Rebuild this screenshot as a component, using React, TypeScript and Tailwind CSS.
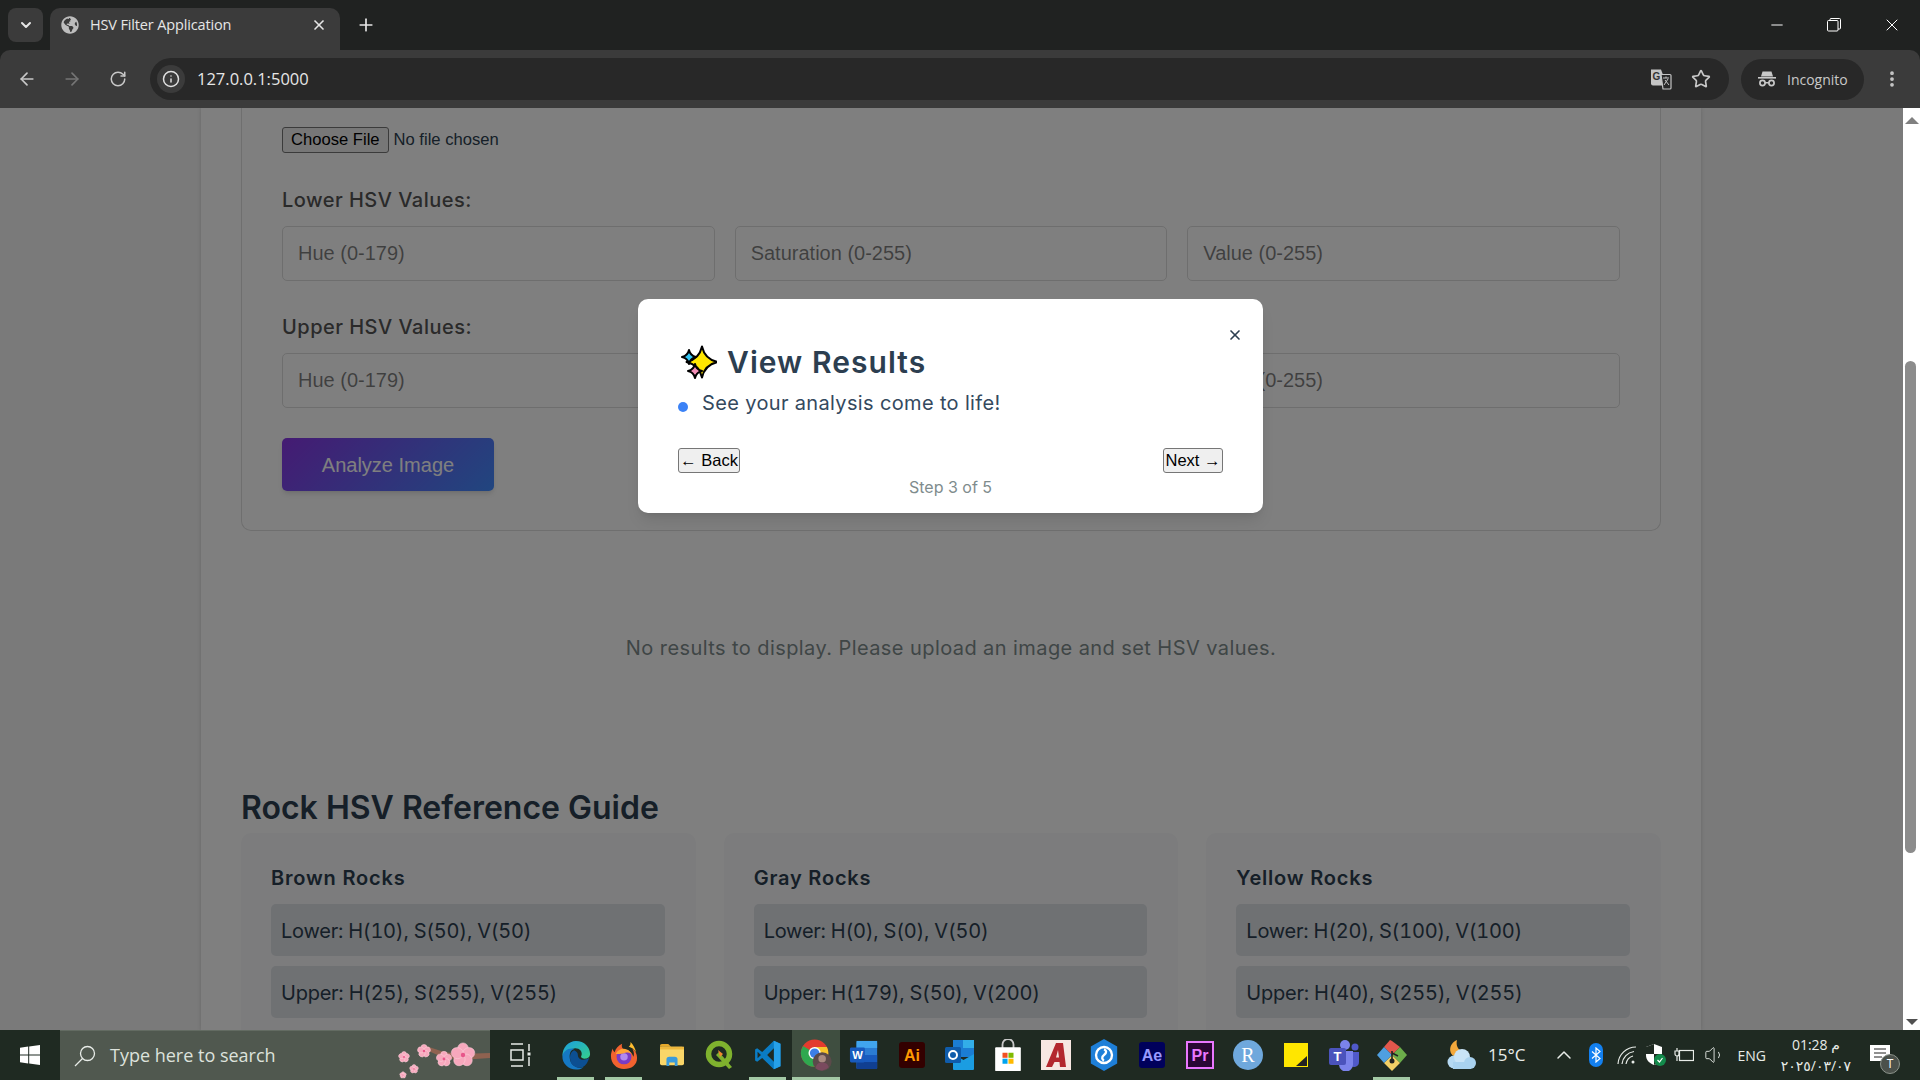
import { ArrowLeft, ArrowRight, ChevronDown, ChevronUp, Info, Minus, MoreVertical, Plus, RotateCw, Star, Volume1, X } from "lucide-react";
import { FaGlobeAmericas } from "react-icons/fa";
import type { ReactNode } from "react";

const ui = "font-['Inter',sans-serif]";

const guides = [
  { name: "Brown Rocks", lower: "Lower: H(10), S(50), V(50)", upper: "Upper: H(25), S(255), V(255)" },
  { name: "Gray Rocks", lower: "Lower: H(0), S(0), V(50)", upper: "Upper: H(179), S(50), V(200)" },
  { name: "Yellow Rocks", lower: "Lower: H(20), S(100), V(100)", upper: "Upper: H(40), S(255), V(255)" },
];

const HsvRow = ({ label, top }: { label: string; top: string }) => (
  <div className={top}>
    <div className={`${ui} text-[20px] leading-[30px] font-medium tracking-[0.024em] text-[#555]`}>{label}</div>
    <div className="mt-[11px] grid grid-cols-3 gap-5">
      {["Hue (0-179)", "Saturation (0-255)", "Value (0-255)"].map((p) => (
        <input
          key={p}
          placeholder={p}
          className="h-[55px] w-full rounded-[5px] border border-[#ddd] bg-white px-[15px] font-['Liberation_Sans',sans-serif] text-[20px]"
        />
      ))}
    </div>
  </div>
);

// four point star with concave sides
const star = (cx: number, cy: number, r: number) => {
  const k = r * 0.18;
  return `M${cx} ${cy - r}Q${cx + k} ${cy - k} ${cx + r} ${cy}Q${cx + k} ${cy + k} ${cx} ${cy + r}Q${cx - k} ${cy + k} ${cx - r} ${cy}Q${cx - k} ${cy - k} ${cx} ${cy - r}Z`;
};

const Sparkles = () => (
  <svg width="36" height="34" viewBox="0 0 36 34">
    <path d={star(21, 17, 15.5)} fill="#ffe600" stroke="#000" strokeWidth="2" strokeLinejoin="round" />
    <path d={star(8, 12, 7)} fill="#35c6f4" stroke="#000" strokeWidth="2" strokeLinejoin="round" />
    <path d={star(14, 26, 7)} fill="#f48fb8" stroke="#000" strokeWidth="2" strokeLinejoin="round" />
  </svg>
);

const Incognito = () => (
  <svg width="20" height="20" viewBox="0 0 20 20" fill="#c8c8c8">
    <path d="M5.500 2.500h9l1.500 5h-12z" />
    <rect x="1" y="8" width="18" height="1.600" />
    <circle cx="5.500" cy="14" r="2.600" fill="none" stroke="#c8c8c8" strokeWidth="1.700" />
    <circle cx="14.500" cy="14" r="2.600" fill="none" stroke="#c8c8c8" strokeWidth="1.700" />
    <rect x="8" y="13" width="4" height="1.500" />
  </svg>
);

const Translate = () => (
  <svg width="22" height="22" viewBox="0 0 22 22">
    <path d="M1 1.500h10l6 16H3a2 2 0 0 1-2-2z" fill="#c4c4c4" />
    <text x="2.500" y="12" fontSize="10" fontWeight="700" fill="#333" fontFamily="Liberation Sans, sans-serif">G</text>
    <path d="M11 6.500h9a1 1 0 0 1 1 1V20a1 1 0 0 1-1 1h-7z" fill="#282828" stroke="#c4c4c4" strokeWidth="1.200" />
    <path d="M13 10h6M16 8.500V10M14 17l4-6M15 12l4 5" stroke="#c4c4c4" strokeWidth="1" fill="none" />
  </svg>
);

const TopBar = () => (
  <div className="h-[50px] bg-[#202221] flex items-start pl-2 text-[#e6e6e6]">
    <div className="mt-2 flex h-[34px] w-[35px] items-center justify-center rounded-lg bg-[#3b3b3b]">
      <ChevronDown size={16} strokeWidth={3} />
    </div>
    <div className="ml-[7px] mt-2 flex h-[42px] w-[290px] items-center rounded-t-[10px] bg-[#3b3b3b] pl-[11px] pr-[13px] pb-[8px]">
      <FaGlobeAmericas size={18} className="text-[#bdbdbd]" />
      <span className="ml-[11px] font-['Open_Sans',sans-serif] text-[14.500px] tracking-[-0.01em]">HSV Filter Application</span>
      <X size={16} strokeWidth={2.500} className="ml-auto" />
    </div>
    <Plus size={20} strokeWidth={2} className="ml-[16px] mt-[15px]" />
    <div className="ml-auto flex items-center pt-[2px] text-white">
      <div className="flex h-[46px] w-[56px] items-center justify-center"><Minus size={18} strokeWidth={1.300} /></div>
      <div className="flex h-[46px] w-[58px] items-center justify-center">
        <svg width="14" height="14" viewBox="0 0 14 14" fill="none" stroke="#fff"><rect x="0.500" y="2.500" width="10.500" height="10.500" rx="1" /><path d="M3 2.500V1.500a1 1 0 0 1 1-1h8.500a1 1 0 0 1 1 1V10a1 1 0 0 1-1 1H11" /></svg>
      </div>
      <div className="flex h-[46px] w-[57px] items-center justify-center"><X size={20} strokeWidth={1.200} /></div>
    </div>
  </div>
);

const Toolbar = () => (
  <div className="bg-[#202221]">
    <div className="flex h-[58px] items-center rounded-t-[10px] bg-[#3b3b3b] text-[#c8c8c8] font-['Open_Sans',sans-serif]">
      <ArrowLeft size={20} className="ml-[17px]" />
      <ArrowRight size={20} className="ml-[25px] text-[#757575]" />
      <RotateCw size={18} className="ml-[27px]" />
      <div className="ml-[23px] flex h-[42px] w-[1579px] items-center rounded-full bg-[#282828] pl-[7px] pr-[18px]">
        <div className="flex h-[28px] w-[28px] items-center justify-center rounded-full bg-[#3b3b3b]"><Info size={18} className="text-[#e0e0e0]" /></div>
        <span className="ml-[12px] text-[16.500px] text-[#e6e6e6]">127.0.0.1:5000</span>
        <div className="ml-auto flex items-center gap-[19px]">
          <Translate />
          <Star size={20} strokeWidth={2} />
        </div>
      </div>
      <div className="ml-3 flex h-[41px] w-[123px] items-center gap-[10px] rounded-full bg-[#282828] pl-4 text-[14px]">
        <Incognito />
        <span>Incognito</span>
      </div>
      <MoreVertical size={20} strokeWidth={2.500} className="ml-[18px]" />
    </div>
  </div>
);

const Scrollbar = () => (
  <div className="flex w-[17px] flex-col bg-white">
    <div className="flex h-6 items-center justify-center">
      <div className="h-0 w-0 border-x-[7px] border-b-[7px] border-x-transparent border-b-[#808080]" />
    </div>
    <div className="h-[229px]" />
    <div className="ml-[2px] h-[492px] w-[11px] rounded-full bg-[#8c8c8c]" />
    <div className="flex-1" />
    <div className="flex h-[17px] items-center justify-center">
      <div className="h-0 w-0 border-x-[6px] border-t-[6px] border-x-transparent border-t-[#505050]" />
    </div>
  </div>
);

const Tour = () => (
  <div className="absolute inset-0 flex items-start justify-center bg-black/50 pr-[2px]">
    <div className="relative mt-[191px] h-[214px] w-[625px] rounded-[10px] bg-white px-10 pt-[45px] shadow-lg">
      <X size={16} strokeWidth={2.500} className="absolute right-[20px] top-[28px] text-[#2c3e50]" />
      <div className="flex items-center gap-[10px] pl-[3px]">
        <Sparkles />
        <h2 className={`${ui} text-[30px] leading-[36px] font-semibold tracking-[0.035em] text-[#2c3e50]`}>View Results</h2>
      </div>
      <div className="mt-[8px] flex items-center">
        <span className="mt-[8px] h-[10px] w-[10px] rounded-full bg-[#3b82f6]" />
        <p className={`${ui} ml-[14px] text-[20px] leading-[30px] tracking-[0.0175em] text-[#34495e]`}>See your analysis come to life!</p>
      </div>
      <div className="mt-[30px] flex justify-between whitespace-nowrap font-['Liberation_Sans',sans-serif] text-[16.500px] text-black">
        <button className="flex h-[25px] w-[62px] items-center justify-center rounded-[3px] border border-[#767676] bg-[#efefef]">← Back</button>
        <button className="flex h-[25px] w-[60px] items-center justify-center rounded-[3px] border border-[#767676] bg-[#efefef]">Next →</button>
      </div>
      <p className={`${ui} mt-[2px] text-center text-[16px] leading-[24px] text-[#7f8c8d]`}>Step 3 of 5</p>
    </div>
  </div>
);

const Page = () => (
  <div className="relative h-[922px] flex-1 overflow-hidden bg-[#f4f4f4]">
    <div className="ml-[201px] h-full w-[1500px] bg-white px-10 shadow-[0_0_4px_rgba(0,0,0,0.15)]">
      <div className="h-[423px] rounded-b-[10px] border border-t-0 border-[#dedede] px-10 pt-[19px]">
        <input type="file" className="block h-[26px] text-[16.600px] font-['Liberation_Sans',sans-serif] text-[#2c3e50] file:h-[26px] file:rounded-[3px] file:border file:border-solid file:border-[#767676] file:bg-[#efefef] file:px-[8px] file:text-black file:mr-[5px]" />
        <HsvRow label="Lower HSV Values:" top="mt-[32px]" />
        <HsvRow label="Upper HSV Values:" top="mt-[31px]" />
        <button className="mt-[30px] h-[53px] w-[212px] rounded-[5px] bg-[linear-gradient(135deg,#8a36e6,#428cff)] font-['Liberation_Sans',sans-serif] text-[20px] text-white shadow-md">Analyze Image</button>
      </div>
      <p className={`${ui} mt-[102px] text-center text-[20px] leading-[30px] tracking-[0.021em] text-[#7f8c8d]`}>No results to display. Please upload an image and set HSV values.</p>
      <h2 className={`${ui} mt-[126px] text-[32px] leading-[38px] font-semibold text-[#2c3e50]`}>Rock HSV Reference Guide</h2>
      <div className="mt-[6px] grid grid-cols-3 gap-[28px]">
        {guides.map((g) => (
          <div key={g.name} className="h-[300px] rounded-[10px] bg-[#f8f9fa] pl-[30px] pr-[31px] pt-[30px]">
            <h3 className={`${ui} text-[20px] leading-[30px] font-semibold tracking-[0.04em] text-[#2c3e50]`}>{g.name}</h3>
            <div className={`${ui} mt-[11px] flex h-[52px] items-center rounded-[5px] bg-[#dee2e6] px-[10px] pt-[1px] text-[20px] tabular-nums tracking-[-0.012em] text-[#2c3e50]`}>{g.lower}</div>
            <div className={`${ui} mt-[10px] flex h-[52px] items-center rounded-[5px] bg-[#dee2e6] px-[10px] pt-[1px] text-[20px] tabular-nums tracking-[-0.012em] text-[#2c3e50]`}>{g.upper}</div>
          </div>
        ))}
      </div>
    </div>
    <Tour />
  </div>
);

const Slot = ({ children, on, active }: { children: ReactNode; on?: boolean; active?: boolean }) => (
  <div className={`relative flex h-[50px] w-12 items-center justify-center ${active ? "bg-[#3f4e40]" : ""}`}>
    {children}
    {on && <div className={`absolute bottom-0 h-[3px] bg-[#a3c9a5] ${active ? "w-full" : "w-[37px] left-[5px]"}`} />}
  </div>
);

const Edge = () => (
  <svg width="30" height="30" viewBox="0 0 32 32">
    <defs>
      <linearGradient id="e1" x1="0" y1="0" x2="1" y2="1"><stop offset="0" stopColor="#1b9de2" /><stop offset="1" stopColor="#35d08a" /></linearGradient>
    </defs>
    <path d="M16 1C25 1 31 7.500 31 15c0 5-6 6-9 4-1-1-.5-2 0-3 1-4-3-8-8-7C8 10 3 14 1.500 17 1.500 8 8 1 16 1Z" fill="url(#e1)" />
    <path d="M1.500 17C3 11 9 8 14 9.500 9 11 8.500 17 10 22c1.500 5 8 9 14 7-3 2-5 2.500-8 2.500C8 31.500 1 25 1.500 17Z" fill="#1578c4" />
    <path d="M10 22c-1-5 0-9 4-11 2 1 4 2.500 4 5 0 5 6 7 12 3-1 4-3 8-7 10-6 2-12-2-13-7Z" fill="#0c4f92" />
  </svg>
);

const Firefox = () => (
  <svg width="28" height="30" viewBox="0 0 30 32">
    <path d="M15 31C7 31 1 25 1 17c0-3 1-6 2-8 0 2 1 3 2 4 1-4 4-7 8-9-1 3 0 5 2 6 5 1 9 3 10 8 1-2 1-5-1-9 3 2 5 6 5 10 0 8-6 12-14 12Z" fill="#f2622f" />
    <path d="M22 2c3 3 5 7 6 11-2-3-5-5-8-6 2-1 2-3 2-5Z" fill="#ffbd30" />
    <circle cx="15" cy="18" r="8" fill="#7a3cc4" />
    <circle cx="15" cy="18" r="4" fill="#b28af0" />
    <path d="M6 15c2-5 8-7 12-5 3 1 4 3 5 5-3-2-6-2-8-1-4 1-7 1-9 1Z" fill="#ffa436" />
  </svg>
);

const Folder = () => (
  <svg width="28" height="24" viewBox="0 0 28 26">
    <path d="M1 3a2 2 0 0 1 2-2h7l3 3h-12Z" fill="#e5a82b" />
    <rect x="1" y="4" width="26" height="20" rx="2" fill="#f9d668" />
    <rect x="1" y="4" width="26" height="3" fill="#eeb83d" />
    <path d="M8 25v-7a3 3 0 0 1 3-3h6a3 3 0 0 1 3 3v7h-3v-4h-6v4Z" fill="#3a9bdc" />
  </svg>
);

const Qgis = () => (
  <svg width="30" height="30" viewBox="0 0 30 30">
    <circle cx="14" cy="14" r="10.500" fill="none" stroke="#7fb22e" strokeWidth="5.500" />
    <path d="M14 12l13 15-3 2-13-14Z" fill="#7fb22e" />
    <path d="M13 10l5 4-3 3Z" fill="#ee8a2f" />
  </svg>
);

const Vscode = () => (
  <svg width="30" height="30" viewBox="0 0 32 36">
    <path d="M23 1l8 3.500v27L23 35 9 21.500 3 26l-2.500-1.500V11.500L3 10l6 4.500Z" fill="#0a7cc4" />
    <path d="M23 1l8 3.500v27L23 35Z" fill="#26a0e8" />
    <path d="M23 10l-8 8 8 8Z" fill="#1f2a22" />
    <path d="M3.500 14l4 4-4 4Z" fill="#1f2a22" />
  </svg>
);

const Chrome = () => (
  <svg width="33" height="34" viewBox="0 0 34 36">
    <circle cx="15" cy="16" r="14.500" fill="#e33b2e" />
    <path d="M15 30.500A14.500 14.500 0 0 0 28 9.500H15Z" fill="#f7c52b" />
    <path d="M2.500 23.500A14.500 14.500 0 0 0 15 30.500V16ZM2.500 23.500A14.500 14.500 0 0 1 2.800 8.500L15 16Z" fill="#2fa84f" />
    <circle cx="15" cy="16" r="6.500" fill="#fff" />
    <circle cx="15" cy="16" r="5" fill="#3c7fe8" />
    <circle cx="23" cy="25" r="10" fill="#5b4a4a" />
    <circle cx="23" cy="22" r="4" fill="#a88a80" />
    <path d="M16 32c1-5 4-6 7-6s6 1 7 5a10 10 0 0 1-14 1Z" fill="#7a4a5e" />
  </svg>
);

const Word = () => (
  <svg width="30" height="30" viewBox="0 0 30 32">
    <rect x="7" y="1" width="22" height="30" rx="2" fill="#2b7cd3" />
    <rect x="7" y="1" width="22" height="7.500" fill="#41a5ee" />
    <rect x="7" y="16" width="22" height="7.500" fill="#185abd" />
    <rect x="7" y="23.500" width="22" height="7.500" fill="#103f91" />
    <rect x="0" y="8" width="16" height="16" rx="1.500" fill="#185abd" />
    <text x="8" y="20.500" textAnchor="middle" fontSize="12" fontWeight="700" fill="#fff" fontFamily="Liberation Sans, sans-serif">W</text>
  </svg>
);

const Badge = ({ bg, fg, label, border }: { bg: string; fg: string; label: string; border?: string }) => (
  <svg width="28" height="28" viewBox="0 0 28 28">
    <rect x="1" y="1" width="26" height="26" rx={border ? 0 : 3} fill={bg} stroke={border ?? "none"} strokeWidth={border ? 2 : 0} />
    <text x="14" y="20" textAnchor="middle" fontSize="16" fontWeight="700" fill={fg} fontFamily="Liberation Sans, sans-serif">{label}</text>
  </svg>
);

const Outlook = () => (
  <svg width="30" height="32" viewBox="0 0 30 32">
    <rect x="8" y="1" width="21" height="17" fill="#1b7dd3" />
    <rect x="18" y="1" width="11" height="8" fill="#33aee8" />
    <path d="M8 15l10.500 6L29 15v15a1 1 0 0 1-1 1H9a1 1 0 0 1-1-1Z" fill="#1b9de2" />
    <rect x="0" y="8" width="16" height="16" rx="1.500" fill="#0f5cab" />
    <circle cx="8" cy="16" r="4" fill="none" stroke="#fff" strokeWidth="2" />
  </svg>
);

const Store = () => (
  <svg width="30" height="33" viewBox="0 0 30 36">
    <path d="M9 10V6a6 6 0 0 1 12 0v4" fill="none" stroke="#c8c8c8" strokeWidth="2" />
    <rect x="1" y="9" width="28" height="26" rx="1" fill="#fff" />
    <rect x="9" y="15" width="5.500" height="5.500" fill="#f25022" />
    <rect x="15.500" y="15" width="5.500" height="5.500" fill="#7fba00" />
    <rect x="9" y="21.500" width="5.500" height="5.500" fill="#00a4ef" />
    <rect x="15.500" y="21.500" width="5.500" height="5.500" fill="#ffb900" />
  </svg>
);

const Autocad = () => (
  <svg width="30" height="30" viewBox="0 0 30 30">
    <rect width="30" height="30" fill="#f7e7e2" />
    <path d="M5 27L15 3h7l3 24h-6l-.5-5h-5l-2.500 5Zm10-9.500h3L17 10Z" fill="#b3272e" />
  </svg>
);

const Hex = () => (
  <svg width="28" height="32" viewBox="0 0 28 34">
    <path d="M14 0l14 8v18l-14 8L0 26V8Z" fill="#1e7fd8" />
    <circle cx="14" cy="17" r="8.500" fill="none" stroke="#fff" strokeWidth="2.500" />
    <path d="M14 11c3 1 3 4 0 6s-2 5 0 6" fill="none" stroke="#fff" strokeWidth="2.500" />
  </svg>
);

const Sticky = () => (
  <svg width="24" height="24" viewBox="0 0 24 24">
    <rect width="24" height="24" fill="#ffe600" />
    <path d="M23 13v10H12Z" fill="#222" />
  </svg>
);

const Teams = () => (
  <svg width="32" height="32" viewBox="0 0 32 32">
    <circle cx="17" cy="6" r="5" fill="#7b83eb" />
    <circle cx="27" cy="8" r="3.500" fill="#5059c9" />
    <path d="M22 13h9v10a5 5 0 0 1-9 3Z" fill="#5059c9" />
    <path d="M10 12h15v13a7 7 0 0 1-14 1Z" fill="#7b83eb" />
    <rect x="1" y="9" width="17" height="17" rx="2" fill="#4b53bc" />
    <text x="9.500" y="22" textAnchor="middle" fontSize="13" fontWeight="700" fill="#fff" fontFamily="Liberation Sans, sans-serif">T</text>
  </svg>
);

const GitApp = () => (
  <svg width="32" height="32" viewBox="0 0 32 32">
    <path d="M16 16L8 8l6-7 2 1 8 6Z" fill="#e2574c" />
    <path d="M16 16l8-8 7 8-7 8Z" fill="#6cae4a" />
    <path d="M16 16l8 8-8 8-8-8Z" fill="#f2cf66" />
    <path d="M16 16l-8 8-7-8 7-8Z" fill="#4f9fe0" />
    <circle cx="16" cy="22" r="2.500" fill="#222" />
    <path d="M16 22V12M16 14l6 3" stroke="#222" strokeWidth="1.600" fill="none" />
  </svg>
);

const Weather = () => (
  <svg width="32" height="30" viewBox="0 0 32 30">
    <path d="M12 0c-1 4 0 8 3 10s4 2 6 2c-2 4-7 6-12 4S3 4 12 0Z" fill="#f4a93b" />
    <circle cx="9" cy="22" r="6.500" fill="#b5d9f2" />
    <circle cx="17" cy="17" r="8" fill="#c9e4f7" />
    <circle cx="25" cy="23" r="6" fill="#a9d2ef" />
    <rect x="8" y="22" width="18" height="7" fill="#a9d2ef" />
  </svg>
);

const flowers = [
  [65, 23, 11],
  [46, 27, 7],
  [26, 19, 6],
  [6, 25, 5],
  [16, 37, 4],
  [5, 43, 3],
];

const Blossom = () => (
  <svg width="92" height="48" viewBox="0 0 92 48">
    <path d="M28 14l18 6 16 2 30-1v5l-30 2-18-3-18-8Z" fill="#8f6250" />
    {flowers.map(([x, y, r]) => (
      <g key={`${x}-${y}`}>
        {[0, 72, 144, 216, 288].map((a) => (
          <ellipse key={a} cx={x} cy={y - r * 0.55} rx={r * 0.5} ry={r * 0.55} fill="#f7a8bd" stroke="#fbd0db" strokeWidth="0.500" transform={`rotate(${a} ${x} ${y})`} />
        ))}
        <circle cx={x} cy={y} r={r * 0.2} fill="#e8558a" />
      </g>
    ))}
  </svg>
);

const Taskbar = () => (
  <div className="flex h-[50px] items-center bg-[#1f2a22] text-[#e8ece8]">
    <div className="flex h-full w-[60px] items-center justify-center">
      <svg width="20" height="20" viewBox="0 0 20 20" fill="#fff"><path d="M0 2.800L8.200 1.600V9.500H0ZM9.200 1.500L20 0V9.500H9.200ZM0 10.500H8.200V18.400L0 17.200ZM9.200 10.500H20V20L9.200 18.500Z" /></svg>
    </div>
    <div className="flex h-full w-[430px] items-center border-t border-[#636b62] bg-[#50584f] pl-[14px] font-['Open_Sans',sans-serif] text-[18px] text-[#dde2dc]">
      <svg width="22" height="22" viewBox="0 0 22 22" fill="none" stroke="#e8ece8" strokeWidth="1.300"><circle cx="13.500" cy="8.500" r="7" /><path d="M8.500 13.500L1 21" /></svg>
      <span className="ml-[14px]">Type here to search</span>
      <div className="ml-auto"><Blossom /></div>
    </div>
    <div className="flex h-full w-[62px] items-center justify-center">
      <svg width="22" height="24" viewBox="0 0 22 24" fill="none" stroke="#e8ece8" strokeWidth="1.500"><path d="M1 1h12M1 23h12M1 7h12v10H1zM19 1v7M19 14v9" /><rect x="17.500" y="9.500" width="3" height="3" fill="#e8ece8" stroke="none" /></svg>
    </div>
    <div className="flex">
      <Slot on><Edge /></Slot>
      <Slot on><Firefox /></Slot>
      <Slot><Folder /></Slot>
      <Slot><Qgis /></Slot>
      <Slot on><Vscode /></Slot>
      <Slot on active><Chrome /></Slot>
      <Slot><Word /></Slot>
      <Slot><Badge bg="#330000" fg="#ff9a00" label="Ai" /></Slot>
      <Slot><Outlook /></Slot>
      <Slot><Store /></Slot>
      <Slot><Autocad /></Slot>
      <Slot><Hex /></Slot>
      <Slot><Badge bg="#00005b" fg="#9999ff" label="Ae" /></Slot>
      <Slot><Badge bg="#2a0634" fg="#ea77ff" label="Pr" border="#ea77ff" /></Slot>
      <Slot><div className="flex h-[30px] w-[30px] items-center justify-center rounded-full bg-[#6fa8dc] font-['Liberation_Serif',serif] text-[20px] text-white">R</div></Slot>
      <Slot><Sticky /></Slot>
      <Slot><Teams /></Slot>
      <Slot on><GitApp /></Slot>
    </div>
    <div className="ml-[29px] flex items-center gap-[11px]">
      <Weather />
      <span className="font-['Open_Sans',sans-serif] text-[17px]">15°C</span>
    </div>
    <ChevronUp size={24} strokeWidth={1.500} className="ml-[27px]" />
    <div className="ml-[13px] flex h-[24px] w-[14px] items-center justify-center rounded-full bg-[#1380f0]">
      <svg width="10" height="16" viewBox="0 0 10 16" fill="none" stroke="#fff" strokeWidth="1.200"><path d="M1 4.500l8 7-4 3.500V1l4 3.500-8 7" /></svg>
    </div>
    <svg className="ml-[14px]" width="20" height="20" viewBox="0 0 20 20" fill="none" stroke="#e8ece8" strokeWidth="1.200"><path d="M1 19A18 18 0 0 1 19 2M5 19A14 14 0 0 1 17 6.500M9 19A10 10 0 0 1 16 11" /><circle cx="16" cy="17" r="1.500" fill="#e8ece8" stroke="none" /></svg>
    <svg className="ml-[8px]" width="22" height="24" viewBox="0 0 22 24">
      <path d="M9 1l8 3v8c0 5-3 8-8 10-5-2-8-5-8-10V4Z" fill="#fff" />
      <path d="M9 1v10H1V4ZM9 11h8c0 5-3 8-8 11Z" fill="#1f2a22" />
      <circle cx="15" cy="17" r="6" fill="#138a4b" />
      <path d="M12.500 17l2 2 3-4" stroke="#fff" fill="none" strokeWidth="1.200" />
    </svg>
    <svg className="ml-[7px]" width="20" height="16" viewBox="0 0 20 16" fill="none" stroke="#e8ece8" strokeWidth="1.200"><rect x="5.500" y="3.500" width="14" height="10" /><path d="M3 1v3M1 4h4v3a2 2 0 0 1-4 0ZM3 9v5" /></svg>
    <Volume1 size={22} strokeWidth={1} className="ml-[10px]" />
    <span className="ml-[11px] font-['Open_Sans',sans-serif] text-[14px]">ENG</span>
    <div className="ml-[12px] flex w-[76px] flex-col items-center font-['Open_Sans','DejaVu_Sans',sans-serif] text-[14px] leading-[21px]">
      <span>01:28 م</span>
      <span>٢٠٢٥/٠٣/٠٧</span>
    </div>
    <div className="relative ml-[16px]">
      <svg width="22" height="20" viewBox="0 0 22 20"><path d="M0 0h20v16H0Z" fill="#fff" /><path d="M4 4h12M4 8h12M4 12h8" stroke="#222" strokeWidth="1.200" /></svg>
      <div className="absolute -bottom-[9px] -right-[8px] flex h-5 w-5 items-center justify-center rounded-full border border-[#8b938b] bg-[#4b514b] font-['Open_Sans',sans-serif] text-[12px] text-white">T</div>
    </div>
  </div>
);

export default function App() {
  return (
    <div className="flex h-[1080px] w-[1920px] flex-col overflow-hidden">
      <TopBar />
      <Toolbar />
      <div className="flex">
        <Page />
        <Scrollbar />
      </div>
      <Taskbar />
    </div>
  );
}
